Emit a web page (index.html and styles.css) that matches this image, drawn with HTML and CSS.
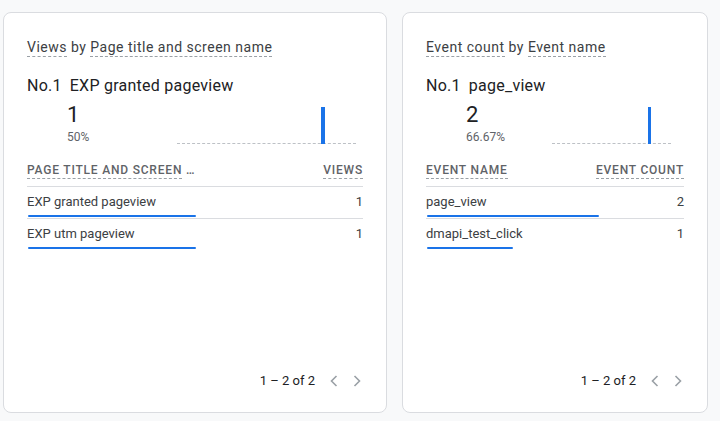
FILE: index.html
```html
<!DOCTYPE html>
<html lang="en">

<head>
    <meta charset="UTF-8">
    <meta name="viewport" content="width=device-width, initial-scale=1.0">
    <title>Top items</title>
    <link rel="stylesheet" href="styles.css">
</head>

<body>
    <div class="cards">
        <!-- 页面标题卡片 -->
        <div class="card card-pages">
            <div class="card-title">
                <span class="dim">Views</span> by <span class="dim">Page title and screen name</span>
            </div>
            <div class="top-name">No.1<span class="top-label">EXP granted pageview</span></div>
            <div class="top-row">
                <div class="top-value">
                    <div class="big-num">1</div>
                    <div class="percent">50%</div>
                </div>
                <div class="spark">
                    <span class="spark-bar"></span>
                </div>
            </div>
            <div class="table-head">
                <span class="th"><span class="dim">Page title and screen</span> …</span>
                <span class="th"><span class="dim">Views</span></span>
            </div>
            <div class="row">
                <div class="row-line">
                    <span class="row-name">EXP granted pageview</span>
                    <span class="row-val">1</span>
                </div>
                <div class="row-bar" style="width: 50%"></div>
            </div>
            <div class="row">
                <div class="row-line">
                    <span class="row-name">EXP utm pageview</span>
                    <span class="row-val">1</span>
                </div>
                <div class="row-bar" style="width: 50%"></div>
            </div>
            <div class="pager">
                <span class="pager-text">1 – 2 of 2</span>
                <a href="javascript:;" class="pager-btn">
                    <svg width="12" height="12" viewBox="0 0 12 12"><polyline points="8.5,1 3.5,6 8.5,11" /></svg>
                </a>
                <a href="javascript:;" class="pager-btn">
                    <svg width="12" height="12" viewBox="0 0 12 12"><polyline points="3.5,1 8.5,6 3.5,11" /></svg>
                </a>
            </div>
        </div>

        <!-- 事件卡片 -->
        <div class="card card-events">
            <div class="card-title">
                <span class="dim">Event count</span> by <span class="dim">Event name</span>
            </div>
            <div class="top-name">No.1<span class="top-label">page_view</span></div>
            <div class="top-row">
                <div class="top-value">
                    <div class="big-num">2</div>
                    <div class="percent">66.67%</div>
                </div>
                <div class="spark">
                    <span class="spark-bar"></span>
                </div>
            </div>
            <div class="table-head">
                <span class="th"><span class="dim">Event name</span></span>
                <span class="th"><span class="dim">Event count</span></span>
            </div>
            <div class="row">
                <div class="row-line">
                    <span class="row-name">page_view</span>
                    <span class="row-val">2</span>
                </div>
                <div class="row-bar" style="width: 66.67%"></div>
            </div>
            <div class="row">
                <div class="row-line">
                    <span class="row-name">dmapi_test_click</span>
                    <span class="row-val">1</span>
                </div>
                <div class="row-bar" style="width: 33.33%"></div>
            </div>
            <div class="pager">
                <span class="pager-text">1 – 2 of 2</span>
                <a href="javascript:;" class="pager-btn">
                    <svg width="12" height="12" viewBox="0 0 12 12"><polyline points="8.5,1 3.5,6 8.5,11" /></svg>
                </a>
                <a href="javascript:;" class="pager-btn">
                    <svg width="12" height="12" viewBox="0 0 12 12"><polyline points="3.5,1 8.5,6 3.5,11" /></svg>
                </a>
            </div>
        </div>
    </div>
</body>

</html>
```

FILE: styles.css
```css
body {
    margin: 0;
    background: #f8f9fa;
    font-family: Roboto, "Liberation Sans", sans-serif;
    color: #3c4043;
}

.cards {
    display: flex;
    gap: 15px;
    padding: 12px 0 0 3px;
}

.card {
    display: flex;
    flex-direction: column;
    box-sizing: border-box;
    height: 401px;
    padding: 24px 23px 21px 23px;
    background: #fff;
    border: 1px solid #dadce0;
    border-radius: 8px;
}

.card-pages {
    width: 384px;
}

.card-events {
    width: 306px;
}

/* 虚线下划线 */
.dim {
    border-bottom: 1px dashed #9aa0a6;
    padding-bottom: 1px;
}

.card-title {
    font-size: 14px;
    line-height: 20px;
    letter-spacing: 0.5px;
    color: #3c4043;
}

.top-name {
    margin-top: 17px;
    font-size: 16px;
    line-height: 24px;
    letter-spacing: 0.25px;
    color: #202124;
}

.top-label {
    margin-left: 8px;
}

.top-row {
    display: flex;
    align-items: flex-end;
    margin-top: 3px;
}

.top-value {
    margin-left: 40px;
}

.card-pages .top-value {
    width: 110px;
}

.card-events .top-value {
    width: 86px;
}

.big-num {
    font-size: 22px;
    line-height: 28px;
    color: #202124;
}

.percent {
    font-size: 12px;
    line-height: 16px;
    color: #5f6368;
}

.spark {
    position: relative;
    height: 36px;
    border-bottom: 1px dashed #bdc1c6;
    margin-bottom: 1px;
}

.card-pages .spark {
    width: 179px;
}

.card-events .spark {
    width: 119px;
}

.spark-bar {
    position: absolute;
    left: 80.5%;
    bottom: -1px;
    width: 4px;
    height: 37px;
    background: #1a73e8;
}

.card-events .spark-bar {
    width: 3px;
}

.table-head {
    display: flex;
    justify-content: space-between;
    margin-top: 17px;
    padding-bottom: 8px;
    font-size: 12px;
    line-height: 16px;
    font-weight: 500;
    letter-spacing: 0.8px;
    text-transform: uppercase;
    color: #5f6368;
}

.th {
    white-space: nowrap;
}

.row {
    box-sizing: border-box;
    height: 32px;
    padding-top: 5px;
    border-top: 1px solid #dadce0;
}

.row-line {
    display: flex;
    justify-content: space-between;
    font-size: 13px;
    line-height: 20px;
    color: #3c4043;
}

.row-bar {
    height: 2px;
    margin: 3px 0 0 1px;
    background: #1a73e8;
    border-radius: 1px;
}

.pager {
    display: flex;
    align-items: center;
    justify-content: flex-end;
    margin-top: auto;
    font-size: 13px;
    line-height: 20px;
    color: #202124;
}

.pager-text {
    margin-right: 2px;
}

.pager-btn {
    display: flex;
    width: 12px;
    height: 12px;
    margin-left: 11px;
}

.pager-btn polyline {
    fill: none;
    stroke: #9aa0a6;
    stroke-width: 1.6;
}
```
